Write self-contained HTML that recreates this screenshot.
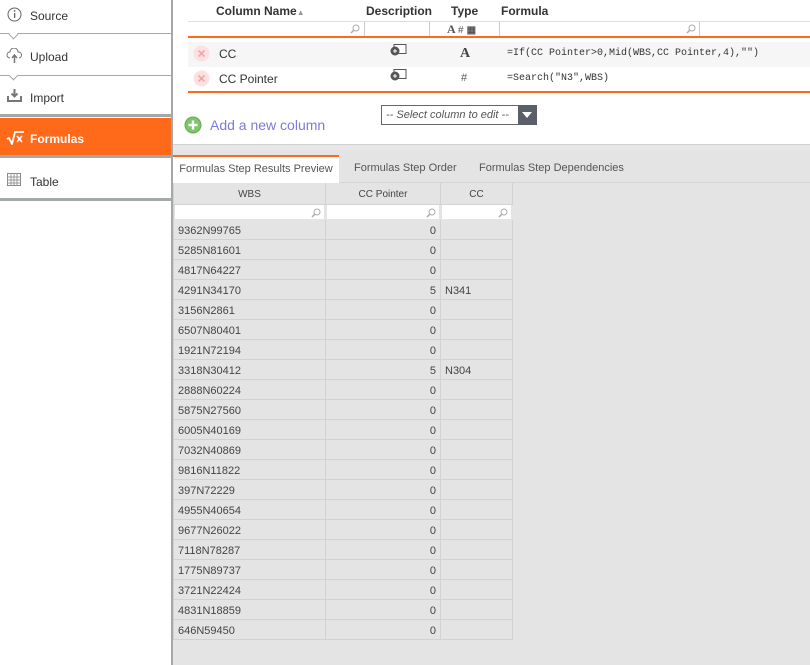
<!DOCTYPE html>
<html><head><meta charset="utf-8"><style>
*{box-sizing:border-box;margin:0;padding:0}
body{width:810px;height:665px;overflow:hidden;background:#fff;font-family:"Liberation Sans",sans-serif;font-size:12px;color:#333;position:relative}
.a{position:absolute}
.sb{left:0;top:0;width:171px;height:665px;background:#fff}
.item{position:absolute;left:0;width:171px;font-size:12px;color:#333}
.item span{position:absolute;left:30px}
.vline{left:171px;top:0;width:2px;height:665px;background:#a4a8a8}
.mono{font-family:"Liberation Mono",monospace;font-size:10px}
.bot{left:173px;top:150px;width:637px;height:515px;background:#e4e4e4}
.cell{position:absolute;height:20px;border-right:1px solid #d2d2d2;border-bottom:1px solid #d2d2d2;line-height:19px;padding:2px 4px 0;font-size:11px;color:#444}
</style></head><body>
<div class="a sb"></div>
<div class="item" style="top:0;height:34px;border-bottom:1px solid #a4a8a8">
 <svg class="a" style="left:7px;top:7px" width="15" height="15"><circle cx="7.5" cy="7.5" r="6.5" fill="none" stroke="#666"/><rect x="7" y="6" width="1.3" height="5" fill="#666"/><circle cx="7.6" cy="4" r="0.9" fill="#666"/></svg>
 <span style="top:9px">Source</span></div>
<div class="a" style="left:10px;top:31px;width:7px;height:7px;border-left:1px solid #a4a8a8;border-bottom:1px solid #a4a8a8;transform:rotate(-45deg);background:#fff"></div>
<div class="item" style="top:35px;height:41px;border-bottom:1px solid #a4a8a8">
 <svg class="a" style="left:6px;top:13px" width="17" height="16"><path d="M4 10a3 3 0 0 1 0-6a4 4 0 0 1 8 0a3 3 0 0 1 1 6" fill="none" stroke="#777"/><path d="M8.5 15V8M6 10l2.5-3 2.5 3" fill="none" stroke="#777" stroke-width="1.5"/></svg>
 <span style="top:15px">Upload</span></div>
<div class="a" style="left:10px;top:72px;width:7px;height:7px;border-left:1px solid #a4a8a8;border-bottom:1px solid #a4a8a8;transform:rotate(-45deg);background:#fff"></div>
<div class="item" style="top:76px;height:41px;border-bottom:3px solid #a4a8a8">
 <svg class="a" style="left:7px;top:12px" width="15" height="14"><path d="M7.5 1v7M4.5 5.5l3 3 3-3" fill="none" stroke="#777" stroke-width="2"/><path d="M1 8v5h13V8" fill="none" stroke="#777" stroke-width="2"/></svg>
 <span style="top:15px">Import</span></div>
<div class="item" style="top:118px;height:40px;background:#ff6a1a;color:#fff;font-weight:bold;border-bottom:3px solid #a4a8a8">
 <svg class="a" style="left:6px;top:13px" width="18" height="14"><path d="M1 8l2-1 3 6 3-12h9" fill="none" stroke="#fff" stroke-width="1.8"/><path d="M11 5l5 6M16 5l-5 6" stroke="#fff" stroke-width="1.6"/></svg>
 <span style="top:14px">Formulas</span></div>
<div class="item" style="top:159px;height:42px;border-bottom:3px solid #a4a8a8">
 <svg class="a" style="left:7px;top:14px" width="14" height="13"><rect x="0.5" y="0.5" width="13" height="12" fill="#fff" stroke="#888"/><path d="M0 4h14M0 7h14M0 10h14M4 0v13M7 0v13M10 0v13" stroke="#999"/></svg>
 <span style="top:16px">Table</span></div>
<div class="a vline"></div>

<!-- top -->
<div class="a" style="left:216px;top:4px;font-weight:bold;font-size:12px">Column Name<span style="font-size:8px;color:#999">▲</span></div>
<div class="a" style="left:366px;top:4px;font-weight:bold">Description</div>
<div class="a" style="left:451px;top:4px;font-weight:bold">Type</div>
<div class="a" style="left:501px;top:4px;font-weight:bold">Formula</div>
<div class="a" style="left:188px;top:21px;width:622px;height:1px;background:#ddd"></div>
<div class="a" style="left:364px;top:22px;width:1px;height:14px;background:#ccc"></div>
<div class="a" style="left:429px;top:22px;width:1px;height:14px;background:#ccc"></div>
<div class="a" style="left:499px;top:22px;width:1px;height:14px;background:#ccc"></div>
<div class="a" style="left:699px;top:22px;width:1px;height:14px;background:#ccc"></div>
<svg class="a" style="left:350px;top:24px" width="10" height="10"><circle cx="6" cy="4" r="3" fill="none" stroke="#aaa"/><path d="M4 6L1 9" stroke="#aaa" stroke-width="1.5"/></svg>
<svg class="a" style="left:686px;top:24px" width="10" height="10"><circle cx="6" cy="4" r="3" fill="none" stroke="#aaa"/><path d="M4 6L1 9" stroke="#aaa" stroke-width="1.5"/></svg>
<div class="a" style="left:447px;top:22px;font-size:12px;font-family:'Liberation Serif',serif;font-weight:bold;color:#555">A <span style="font-family:'Liberation Sans';font-weight:normal;font-size:10px">#</span> <span style="font-size:10px">▦</span></div>
<div class="a" style="left:188px;top:36px;width:622px;height:2px;background:#ff6a1a"></div>
<div class="a" style="left:188px;top:42px;width:622px;height:25px;background:#f6f6f6"></div>
<svg class="a" style="left:193px;top:45px" width="17" height="17"><circle cx="8.5" cy="8.5" r="8" fill="#fbe1e1"/><path d="M5.5 5.5l6 6M11.5 5.5l-6 6" stroke="#f3a0a0" stroke-width="1.5"/></svg>
<svg class="a" style="left:193px;top:70px" width="17" height="17"><circle cx="8.5" cy="8.5" r="8" fill="#fbe1e1"/><path d="M5.5 5.5l6 6M11.5 5.5l-6 6" stroke="#f3a0a0" stroke-width="1.5"/></svg>
<div class="a" style="left:219px;top:47px">CC</div>
<div class="a" style="left:219px;top:72px">CC Pointer</div>
<svg class="a" style="left:390px;top:44px" width="17" height="13"><rect x="4" y="0.5" width="12" height="9" fill="#fff" stroke="#555"/><circle cx="5" cy="7" r="4.5" fill="#555"/><path d="M3 7h4M5 5v4" stroke="#fff"/></svg>
<svg class="a" style="left:390px;top:69px" width="17" height="13"><rect x="4" y="0.5" width="12" height="9" fill="#fff" stroke="#555"/><circle cx="5" cy="7" r="4.5" fill="#555"/><path d="M3 7h4M5 5v4" stroke="#fff"/></svg>
<div class="a" style="left:460px;top:46px;font-family:'Liberation Serif',serif;font-weight:bold;font-size:14px;color:#444">A</div>
<div class="a" style="left:461px;top:72px;font-size:11px;color:#555">#</div>
<div class="a mono" style="left:507px;top:48px">=If(CC Pointer&gt;0,Mid(WBS,CC Pointer,4),"")</div>
<div class="a mono" style="left:507px;top:73px">=Search("N3",WBS)</div>
<div class="a" style="left:188px;top:91px;width:622px;height:2px;background:#ff6a1a"></div>
<svg class="a" style="left:184px;top:116px" width="18" height="18"><circle cx="9" cy="9" r="8" fill="#7fc36a" stroke="#6aa85a"/><path d="M9 4.5v9M4.5 9h9" stroke="#fff" stroke-width="2.4"/></svg>
<div class="a" style="left:210px;top:117px;font-size:14px;color:#7b7bd8">Add a new column</div>
<div class="a" style="left:381px;top:105px;width:156px;height:20px;border:1px solid #666;background:#fff"></div>
<div class="a" style="left:386px;top:109px;font-style:italic;font-size:11px;color:#555">-- Select column to edit --</div>
<div class="a" style="left:518px;top:105px;width:19px;height:20px;background:#5b6068"></div>
<div class="a" style="left:522px;top:112px;width:0;height:0;border-left:5px solid transparent;border-right:5px solid transparent;border-top:6px solid #fff"></div>
<div class="a" style="left:173px;top:144px;width:637px;height:6px;background:#e8e8e8;border-top:1px solid #d0d0d0"></div>

<!-- bottom -->
<div class="a bot"></div>
<div class="a" style="left:173px;top:182px;width:637px;height:1px;background:#d4d4d4"></div>
<div class="a" style="left:173px;top:155px;width:166px;height:28px;background:#fff;border-top:2px solid #ff6a1a;font-size:11px;color:#555;text-align:center;line-height:24px">Formulas Step Results Preview</div>
<div class="a" style="left:354px;top:162px;font-size:11px;color:#555">Formulas Step Order</div>
<div class="a" style="left:479px;top:162px;font-size:11px;color:#555">Formulas Step Dependencies</div>
<div class="a" style="left:173px;top:183px;width:1px;height:457px;background:#d2d2d2"></div>
<div id="g"></div>
<script>
var d=[["9362N99765",0],["5285N81601",0],["4817N64227",0],["4291N34170",5,"N341"],["3156N2861",0],["6507N80401",0],["1921N72194",0],["3318N30412",5,"N304"],["2888N60224",0],["5875N27560",0],["6005N40169",0],["7032N40869",0],["9816N11822",0],["397N72229",0],["4955N40654",0],["9677N26022",0],["7118N78287",0],["1775N89737",0],["3721N22424",0],["4831N18859",0],["646N59450",0]];
var h='';var C=[[174,152],[326,115],[441,72]];
var H=["WBS","CC Pointer","CC"];
var mg='<svg width="10" height="10"><circle cx="6" cy="4" r="3" fill="none" stroke="#aaa"/><path d="M4 6L1 9" stroke="#aaa" stroke-width="1.5"/></svg>';
for(var i=0;i<3;i++){h+='<div class="cell" style="left:'+C[i][0]+'px;top:183px;width:'+C[i][1]+'px;height:22px;line-height:20px;text-align:center;font-size:10px">'+H[i]+'</div>';
h+='<div class="a" style="left:'+(C[i][0]+1)+'px;top:205px;width:'+(C[i][1]-3)+'px;height:14px;background:#fff"></div><div class="a" style="left:'+(C[i][0]+C[i][1]-15)+'px;top:207px">'+mg+'</div>';}
for(var r=0;r<d.length;r++){var y=220+r*20;
h+='<div class="cell" style="left:174px;top:'+y+'px;width:152px">'+d[r][0]+'</div>';
h+='<div class="cell" style="left:326px;top:'+y+'px;width:115px;text-align:right">'+d[r][1]+'</div>';
h+='<div class="cell" style="left:441px;top:'+y+'px;width:72px">'+(d[r][2]||'')+'</div>';}
document.getElementById('g').innerHTML=h;
</script>
</body></html>
